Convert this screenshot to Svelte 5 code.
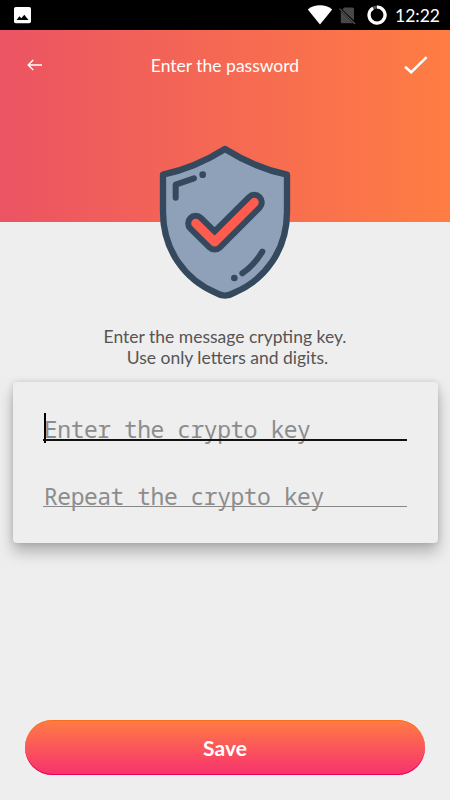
<script lang="ts">
  const title = 'Enter the password';
  const time = '12:22';

  let key = '';
  let repeatKey = '';
</script>

<div class="screen">
  <div class="status-bar">
    <svg class="picture" width="17" height="17" viewBox="0 0 17 17">
      <rect width="17" height="16.3" rx="1.8" fill="#fff" />
      <path d="M2.6 13 L5.4 9.2 L7.3 11.3 L10.3 7.7 L14.5 13 Z" fill="#000" />
    </svg>
    <div class="status-icons">
      <svg width="26" height="20" viewBox="0 0 26 20">
        <path d="M.8 4.4 C7.5 -1 18.5 -1 25.2 4.4 L13 19.6 Z" fill="#fff" />
      </svg>
      <svg class="sim" width="17" height="19" viewBox="0 0 17 19">
        <path d="M5.5 1.5 H13.5 Q15 1.5 15 3 V14.6 L3.3 3.6 Z M1.8 4.9 L14 17.3 H3.2 Q1.8 17.3 1.8 15.8 Z" fill="#484848" />
        <path d="M.5 2.6 L16 18" stroke="#555" stroke-width="1.2" />
      </svg>
      <svg class="battery" width="20" height="20" viewBox="0 0 20 20">
        <circle cx="10" cy="10" r="8" fill="none" stroke="#555" stroke-width="3.2" />
        <path d="M10 2 A8 8 0 1 1 6 3.1" fill="none" stroke="#fff" stroke-width="3.2" />
      </svg>
      <span class="time">{time}</span>
    </div>
  </div>

  <header>
    <button class="icon-button back" aria-label="Back">
      <svg width="16" height="12" viewBox="0 0 16 12" fill="none" stroke="#fff" stroke-width="1.4">
        <path d="M15 6 H1.5 M6.2 1 L1.2 6 L6.2 11" />
      </svg>
    </button>
    <h1>{title}</h1>
    <button class="icon-button confirm" aria-label="Confirm">
      <svg width="24" height="18" viewBox="0 0 24 18" fill="none" stroke="#fff" stroke-width="2.5">
        <path d="M1 10.7 L7.2 16.2 L22.6 1.2" />
      </svg>
    </button>
  </header>

  <main>
    <svg class="shield" width="160" height="175" viewBox="0 0 480 525" stroke-linecap="round" stroke-linejoin="round">
      <path
        d="M240 42 Q329 98 426 119 V230 C426 345 360 435 266 474 Q240 490 214 474 C120 435 54 345 54 230 V119 Q151 98 240 42 Z"
        fill="#8fa1b8"
        stroke="#34495e"
        stroke-width="19"
      />
      <g fill="none" stroke="#34495e" stroke-width="18">
        <path d="M92 188 V149 L147 130" />
        <path d="M352 350 Q327 391 292 415" />
      </g>
      <circle cx="173" cy="119" r="10" fill="#34495e" />
      <circle cx="268" cy="429" r="10" fill="#34495e" />
      <path d="M152 265 L209 321 L328 202" fill="none" stroke="#34495e" stroke-width="63" />
      <path d="M152 265 L209 321 L328 202" fill="none" stroke="#ff5b4f" stroke-width="27" />
    </svg>

    <p class="hint">Enter the message crypting key.<br /><span>Use only letters and digits.</span></p>

    <div class="card">
      <div class="field focused">
        <input type="text" placeholder="Enter the crypto key" bind:value={key} />
        <span class="caret"></span>
      </div>
      <div class="field">
        <input type="text" placeholder="Repeat the crypto key" bind:value={repeatKey} />
      </div>
    </div>

    <button class="save">Save</button>
  </main>
</div>

<style>
  :global(body) {
    background: #eee;
  }

  .screen {
    width: 450px;
    height: 800px;
    display: flex;
    flex-direction: column;
    overflow: hidden;
    background: #eee;
    font-family: Lato, sans-serif;
  }

  .status-bar {
    height: 30px;
    flex-shrink: 0;
    box-sizing: border-box;
    padding: 0 10px 0 14px;
    display: flex;
    align-items: center;
    justify-content: space-between;
    background: #000;
  }

  .status-icons {
    display: flex;
    align-items: center;
  }

  .sim {
    margin-left: 6px;
  }

  .battery {
    margin-left: 11px;
  }

  .time {
    margin-left: 8px;
    font-family: Lato, sans-serif;
    font-size: 17.5px;
    line-height: 28px;
    padding-top: 2px;
    color: #fff;
  }

  header {
    height: 192px;
    flex-shrink: 0;
    box-sizing: border-box;
    padding: 17px 22px 0 25px;
    display: flex;
    align-items: flex-start;
    justify-content: space-between;
    background: linear-gradient(to right, #eb5463, #ff7d43);
  }

  .icon-button {
    width: 40px;
    height: 36px;
    padding: 0;
    border: none;
    background: none;
    display: flex;
    align-items: center;
  }

  .back {
    padding-left: 2px;
  }

  .confirm {
    justify-content: flex-end;
  }

  h1 {
    margin: 0;
    padding-right: 3px;
    font-size: 17.5px;
    font-weight: 400;
    line-height: 37px;
    color: #fff;
  }

  main {
    flex: 1;
    display: flex;
    flex-direction: column;
    align-items: center;
  }

  .shield {
    margin-top: -87px;
    flex-shrink: 0;
  }

  .hint {
    margin: 16px 0 0;
    font-size: 17.5px;
    line-height: 21px;
    text-align: center;
    color: #555;
  }

  .hint span {
    padding-left: 5px;
  }

  .card {
    width: 425px;
    height: 161px;
    margin-top: 14px;
    box-sizing: border-box;
    padding: 29px 30.5px 0;
    display: flex;
    flex-direction: column;
    gap: 28px;
    border-radius: 4px;
    background: #eee;
    box-shadow: 0 9px 15px rgba(0, 0, 0, 0.26), 0 0 6px rgba(0, 0, 0, 0.13);
  }

  .field {
    position: relative;
    height: 39px;
  }

  .field::after {
    content: '';
    position: absolute;
    left: 0;
    right: 0;
    top: 28px;
    height: 1px;
    background: #888;
  }

  .focused::after {
    height: 2px;
    background: #111;
  }

  input {
    display: block;
    width: 100%;
    height: 35px;
    box-sizing: border-box;
    padding: 0 1px;
    border: none;
    outline: none;
    background: none;
    font-family: 'Noto Sans Mono', 'DejaVu Sans Mono', monospace;
    font-size: 23px;
    letter-spacing: -0.48px;
    color: #222;
  }

  input::placeholder {
    color: #8c8c8c;
    opacity: 1;
  }

  .caret {
    position: absolute;
    left: 1px;
    top: 2px;
    width: 2px;
    height: 30px;
    background: #000;
  }

  .save {
    width: 400px;
    height: 55px;
    margin: auto 0 25px;
    padding: 0;
    border: none;
    border-radius: 28px;
    background: linear-gradient(#ff7d43, #f7316f);
    box-shadow: inset 0 1px #f96f1c, inset 0 -1px #e90059;
    font-family: Lato, sans-serif;
    font-size: 21px;
    font-weight: 700;
    color: #fff;
  }
</style>
